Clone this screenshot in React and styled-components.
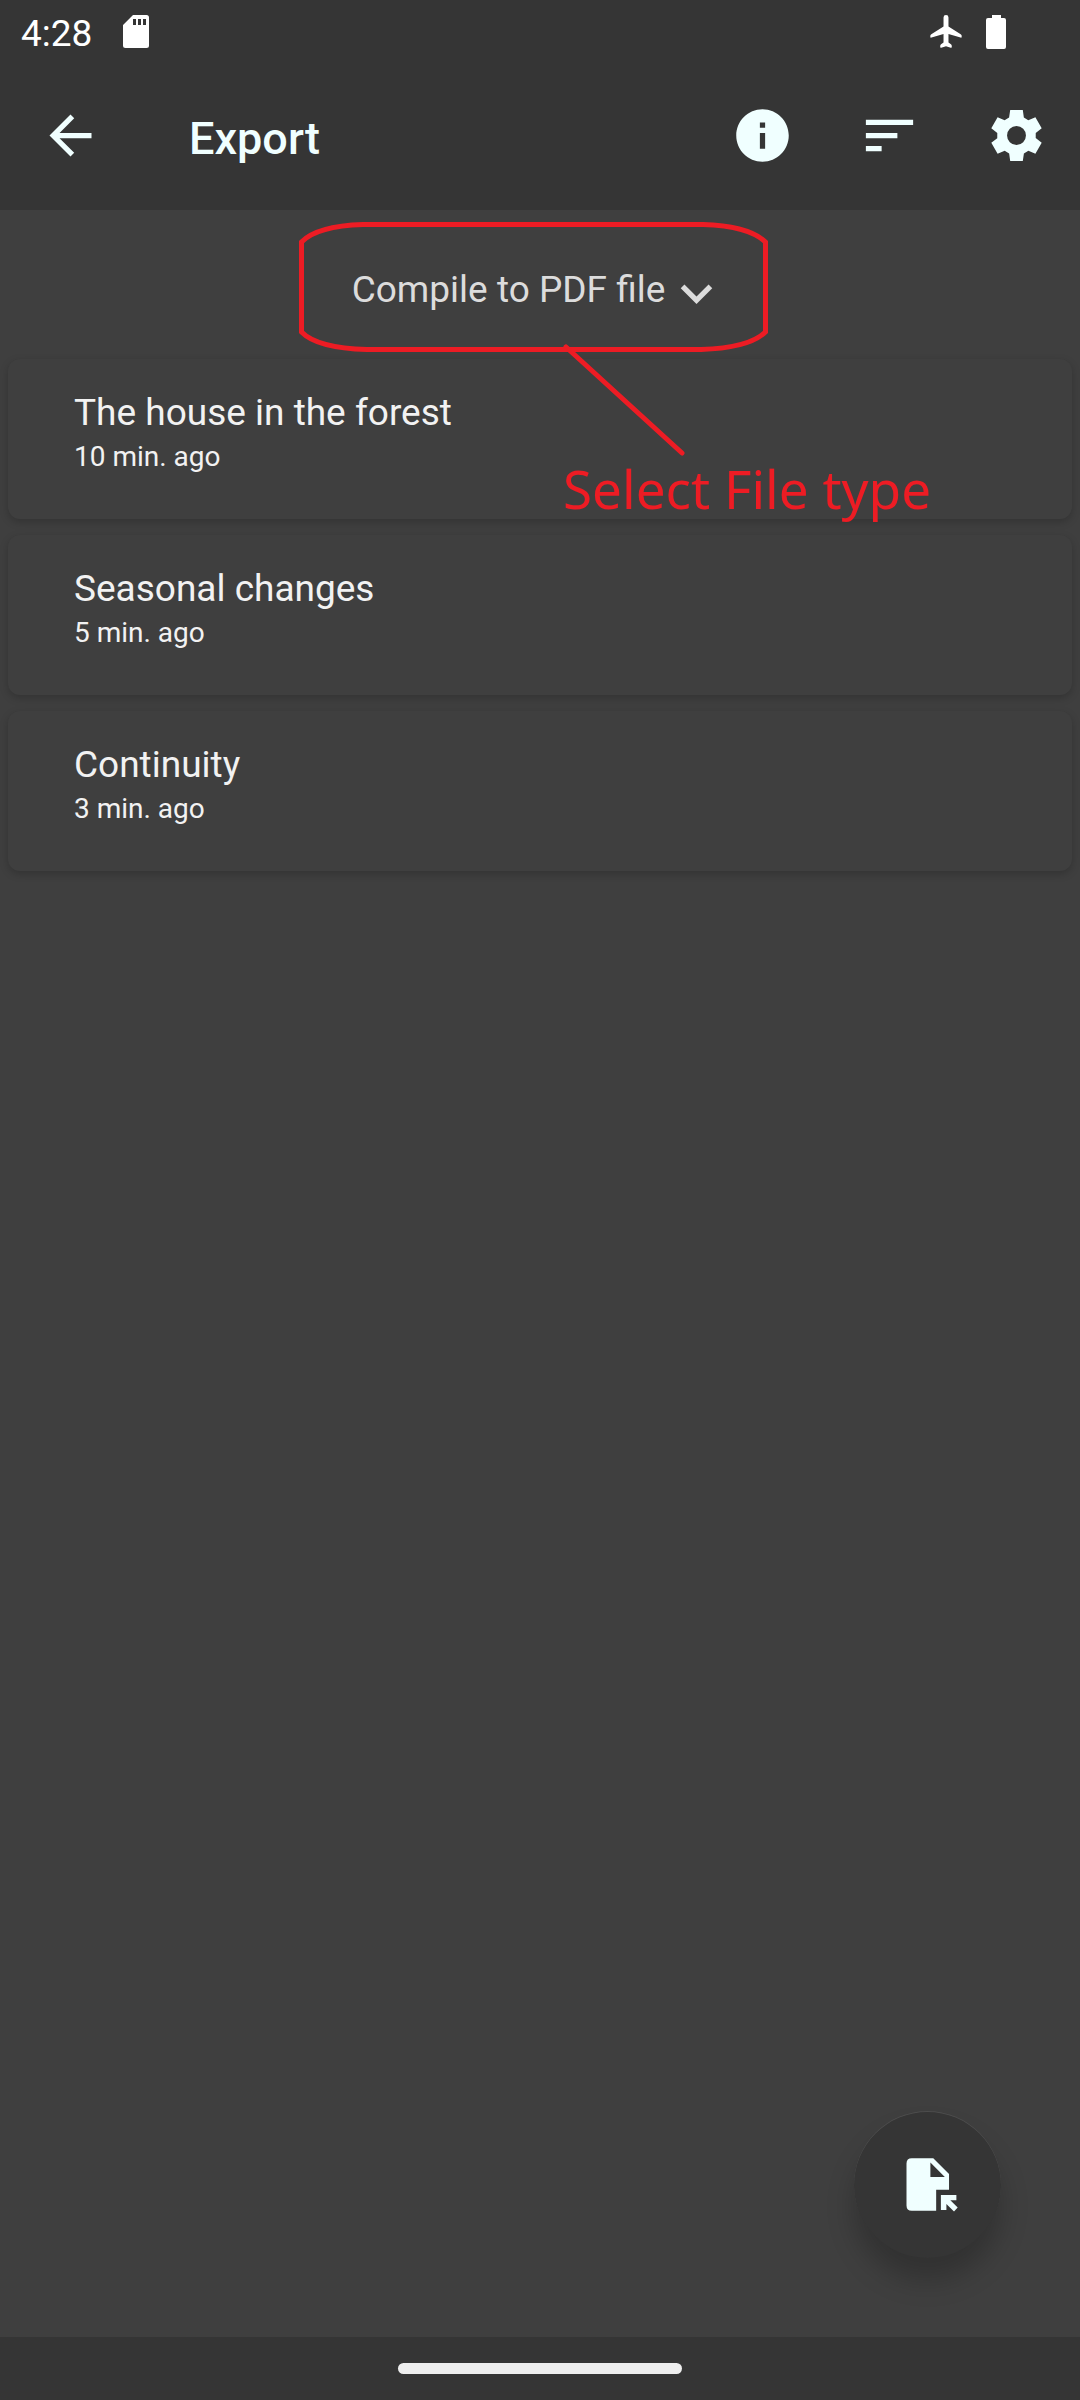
import React, { useState } from "react";
import styled, { createGlobalStyle } from "styled-components";

const GlobalStyle = createGlobalStyle`
  *, *::before, *::after { box-sizing: border-box; }
  body {
    margin: 0;
    background: #3f3f3f;
    color: #f2f2f2;
    font-family: Roboto, "Noto Sans", sans-serif;
  }
`;

const Screen = styled.div`
  display: flex;
  flex-direction: column;
  min-height: 100vh;
`;

const Header = styled.header`
  background: #353535;
`;

const StatusBar = styled.div`
  display: flex;
  align-items: center;
  justify-content: space-between;
  height: 63px;
  padding: 0 74px 0 21px;
  color: #fff;
`;

const StatusGroup = styled.div`
  display: flex;
  align-items: center;
  gap: ${(p) => p.$gap}px;
`;

const Clock = styled.time`
  padding-top: 4px;
  font-size: 37px;
  line-height: 50px;
`;

const Toolbar = styled.div`
  display: flex;
  align-items: center;
  gap: 64px;
  height: 147px;
  padding: 0 32px 2px 39px;
  color: #f0ffff;
`;

const Title = styled.h1`
  flex: 1;
  margin: 0;
  padding: 6px 0 0 23px;
  font-size: 45px;
  font-weight: 500;
  line-height: 56px;
`;

const IconButton = styled.button`
  display: flex;
  padding: 0;
  border: 0;
  background: none;
  color: inherit;
  cursor: pointer;
`;

const Icon = styled.svg`
  display: block;
  flex: none;
  width: ${(p) => p.$w || 63}px;
  height: ${(p) => p.$h || 63}px;
  fill: currentColor;
`;

const Main = styled.main`
  display: flex;
  flex: 1;
  flex-direction: column;
`;

const PickerArea = styled.div`
  position: relative;
  display: flex;
  justify-content: center;
  padding: 43px 0 34px;
`;

const Picker = styled.label`
  display: flex;
  align-items: flex-end;
  color: #dcdcdc;
`;

const TypeSelect = styled.select`
  appearance: none;
  field-sizing: content;
  height: 72px;
  padding: 2px 0 0;
  border: 0;
  background: none;
  color: inherit;
  font-family: inherit;
  font-size: 37px;
  line-height: 70px;
  cursor: pointer;
`;

const Annotation = styled.div`
  position: absolute;
  top: 12px;
  left: 50%;
  margin-left: -241px;
  color: #ed1c24;
  pointer-events: none;
`;

const Caption = styled.p`
  margin: 0 0 0 264px;
  font-family: "Noto Sans", "Open Sans", sans-serif;
  font-size: 53px;
  line-height: 66px;
  white-space: nowrap;
`;

const CardList = styled.ul`
  display: flex;
  flex-direction: column;
  gap: 16px;
  margin: 0;
  padding: 0 8px;
  list-style: none;
`;

const Card = styled.li`
  height: 160px;
  padding: 29px 66px;
  border-radius: 12px;
  background: #3f3f3f;
  box-shadow: 0 3px 8px rgba(0, 0, 0, 0.2);
`;

const CardTitle = styled.h2`
  margin: 0;
  font-size: 37px;
  font-weight: 400;
  line-height: 50px;
`;

const CardTime = styled.p`
  margin: 0;
  font-size: 28px;
  line-height: 38px;
`;

const Fab = styled.button`
  display: flex;
  align-items: center;
  justify-content: center;
  align-self: flex-end;
  width: 147px;
  height: 147px;
  margin: auto 79px 79px 0;
  padding: 0;
  border: 0;
  border-radius: 50%;
  background: #353535;
  color: #f0ffff;
  box-shadow: 0 22px 28px rgba(0, 0, 0, 0.22), inset 0 1px 0 rgba(255, 255, 255, 0.12);
  cursor: pointer;
`;

const NavBar = styled.footer`
  display: flex;
  align-items: center;
  justify-content: center;
  height: 63px;
  background: #353535;
`;

const HomeHandle = styled.div`
  width: 284px;
  height: 11px;
  border-radius: 6px;
  background: #eee;
`;

const documents = [
  { title: "The house in the forest", time: "10 min. ago" },
  { title: "Seasonal changes", time: "5 min. ago" },
  { title: "Continuity", time: "3 min. ago" },
];

const fileTypes = ["PDF", "TXT", "HTML"];

const toothPoints = [[-2.4, -9.7], [2.4, -9.7], [2.8, -6.85], [4.5, -5.85]];

const cogPath =
  "M" +
  Array.from({ length: 6 }, (_, i) => {
    const a = (i * Math.PI) / 3;
    return toothPoints
      .map(([x, y]) => {
        const px = 12 + x * Math.cos(a) - y * Math.sin(a);
        const py = 12 + x * Math.sin(a) + y * Math.cos(a);
        return `${px.toFixed(2)} ${py.toFixed(2)}`;
      })
      .join("L");
  }).join("L") +
  "ZM12 8.4a3.6 3.6 0 1 0 0 7.2a3.6 3.6 0 1 0 0-7.2Z";

function App() {
  const [type, setType] = useState("PDF");
  return (
    <Screen>
      <GlobalStyle />
      <Header>
        <StatusBar>
          <StatusGroup $gap={31}>
            <Clock>4:28</Clock>
            <Icon $w={26} $h={33} viewBox="0 0 26 33" aria-hidden="true">
              <path
                fillRule="evenodd"
                d="M10 0H23.5Q26 0 26 2.5V30.500Q26 33 23.500 33H2.500Q0 33 0 30.500V10ZM10 4v6h3V4ZM15 4v6h3V4ZM20 4v6h3V4Z"
              />
            </Icon>
          </StatusGroup>
          <StatusGroup $gap={24}>
            <Icon $w={32} $h={33} viewBox="2 2 19 20" aria-hidden="true">
              <path d="M21 15.200V14.600Q21 14 20.400 13.600L13 9V3.500a1.500 1.500 0 0 0-3 0V9L2.600 13.600Q2 14 2 14.600V15.300Q2 16 2.700 15.700L10 13.500V18.700L8.500 19.800Q8 20.200 8 20.800V21.400Q8 22 8.600 21.800L11.500 21L14.400 21.800Q15 22 15 21.400V20.800Q15 20.200 14.500 19.800L13 18.700V13.500L20.300 15.700Q21 16 21 15.200Z" />
            </Icon>
            <Icon $w={20} $h={34} viewBox="0 0 20 34" aria-hidden="true">
              <path d="M6 0H15V3H18Q20 3 20 5V32Q20 34 18 34H2Q0 34 0 32V5Q0 3 2 3H6Z" />
            </Icon>
          </StatusGroup>
        </StatusBar>
        <Toolbar>
          <IconButton type="button" aria-label="Back">
            <Icon viewBox="0 0 24 24" aria-hidden="true">
              <path d="M20 11H7.830l5.590-5.590L12 4l-8 8 8 8 1.410-1.410L7.830 13H20v-2z" />
            </Icon>
          </IconButton>
          <Title>Export</Title>
          <IconButton type="button" aria-label="Information">
            <Icon viewBox="0 0 24 24" aria-hidden="true">
              <path d="M12 2C6.480 2 2 6.480 2 12s4.480 10 10 10 10-4.480 10-10S17.520 2 12 2zm1 15h-2v-6h2v6zm0-8h-2V7h2v2z" />
            </Icon>
          </IconButton>
          <IconButton type="button" aria-label="Sort">
            <Icon viewBox="0 0 24 24" aria-hidden="true">
              <path d="M3 18h6v-2H3v2zM3 6v2h18V6H3zm0 7h12v-2H3v2z" />
            </Icon>
          </IconButton>
          <IconButton type="button" aria-label="Settings">
            <Icon viewBox="0 0 24 24" aria-hidden="true">
              <path fillRule="evenodd" d={cogPath} />
            </Icon>
          </IconButton>
        </Toolbar>
      </Header>
      <Main>
        <PickerArea>
          <Picker>
            <TypeSelect
              aria-label="File type"
              value={type}
              onChange={(e) => setType(e.target.value)}
            >
              {fileTypes.map((t) => (
                <option key={t} value={t}>{`Compile to ${t} file`}</option>
              ))}
            </TypeSelect>
            <Icon viewBox="0 0 24 24" aria-hidden="true">
              <path d="M7.410 8.580L12 13.170l4.590-4.590L18 10l-6 6-6-6 1.410-1.420z" />
            </Icon>
          </Picker>
          <Annotation>
            <svg width="469" height="234" viewBox="0 0 469 234" display="block" aria-hidden="true">
              <g fill="none" stroke="#ed1c24" strokeWidth="5">
                <path d="M64 2.500H404Q450 4 466.500 20V110Q450 126 402 127.500H68Q18 126 2.500 110V20Q18 4 64 2.500Z" />
                <path d="M267 125L383 231" strokeLinecap="round" />
              </g>
            </svg>
            <Caption>Select File type</Caption>
          </Annotation>
        </PickerArea>
        <CardList>
          {documents.map((doc) => (
            <Card key={doc.title}>
              <CardTitle>{doc.title}</CardTitle>
              <CardTime>{doc.time}</CardTime>
            </Card>
          ))}
        </CardList>
        <Fab type="button" aria-label="Export file">
          <Icon viewBox="0 0 24 24" aria-hidden="true">
            <path
              fillRule="evenodd"
              d="M6 2H14.200L20.200 8V14H15.300V22H6Q4 22 4 20V4Q4 2 6 2ZM13.100 3.600V9.100H18.600ZM17.100 16H23V18H20.700L23.500 20.800L22.100 22.300L19.200 19.400V21.700H17.100Z"
            />
          </Icon>
        </Fab>
      </Main>
      <NavBar>
        <HomeHandle />
      </NavBar>
    </Screen>
  );
}

export default App;
